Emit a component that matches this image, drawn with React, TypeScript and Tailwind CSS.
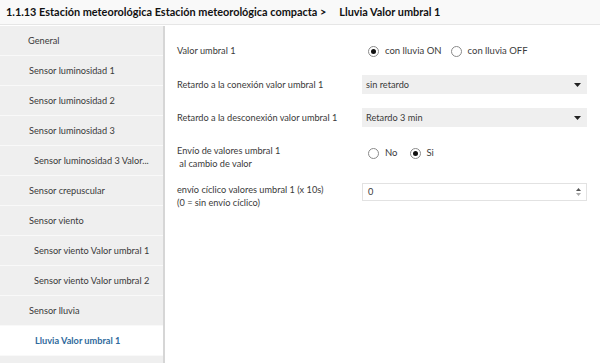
const items: { label: string; indent: string; active?: boolean }[] = [
  { label: "General", indent: "pl-[28px]" },
  { label: "Sensor luminosidad 1", indent: "pl-[29px]" },
  { label: "Sensor luminosidad 2", indent: "pl-[29px]" },
  { label: "Sensor luminosidad 3", indent: "pl-[29px]" },
  { label: "Sensor luminosidad 3 Valor...", indent: "pl-[34px]" },
  { label: "Sensor crepuscular", indent: "pl-[29px]" },
  { label: "Sensor viento", indent: "pl-[29px]" },
  { label: "Sensor viento Valor umbral 1", indent: "pl-[34px]" },
  { label: "Sensor viento Valor umbral 2", indent: "pl-[34px]" },
  { label: "Sensor lluvia", indent: "pl-[29px]" },
  { label: "Lluvia Valor umbral 1", indent: "pl-[35px]", active: true },
];

function Radio({ checked, label }: { checked?: boolean; label: string }) {
  return (
    <div className="flex items-center gap-[6px]">
      <span className="w-[11px] h-[11px] rounded-full border border-[#8a8a8a] bg-white flex items-center justify-center">
        {checked && <span className="w-[5px] h-[5px] rounded-full bg-[#111]" />}
      </span>
      <span>{label}</span>
    </div>
  );
}

function Select({ value }: { value: string }) {
  return (
    <div className="w-[225px] h-[19px] bg-[#efefef] flex items-center justify-between pl-[4px] pr-[6px]">
      <span>{value}</span>
      <svg width="7" height="4" viewBox="0 0 7 4">
        <path d="M0 0h7L3.5 4z" fill="#222" />
      </svg>
    </div>
  );
}

export default function App() {
  return (
    <div className="w-[600px] h-[363px] bg-white overflow-hidden text-[#3a3a3a] font-['Lato',sans-serif] whitespace-nowrap">
      <div className="h-[25px] bg-[#f9f9f9] border-b border-[#e6e6e6] flex items-center pl-[6px] text-[10.9px] font-bold text-[#111]">
        <span>1.1.13 Estación meteorológica Estación meteorológica compacta &gt;</span>
        <span className="ml-[13px]">Lluvia Valor umbral 1</span>
      </div>
      <div className="flex h-[338px] pt-[1px]">
        <div className="w-[165px] bg-[#efefef] border-r-2 border-[#d6d6d6] flex flex-col">
          {items.map((it) => (
            <div
              key={it.label}
              className={`h-[30px] shrink-0 flex items-center border-b border-[#f9f9f9] text-[9.2px] ${it.indent} ${
                it.active ? "bg-white text-[#2f6a9c] font-bold" : ""
              }`}
            >
              {it.label}
            </div>
          ))}
        </div>
        <div className="flex-1 pl-[12px] text-[9.2px]">
          <div className="flex items-center h-[30px] mt-[10px]">
            <div className="w-[185px]">Valor umbral 1</div>
            <div className="flex items-center gap-[9px] pl-[6px] text-[9.5px]">
              <Radio checked label="con lluvia ON" />
              <Radio label="con lluvia OFF" />
            </div>
          </div>
          <div className="flex items-center mt-[9px]">
            <div className="w-[185px]">Retardo a la conexión valor umbral 1</div>
            <Select value="sin retardo" />
          </div>
          <div className="flex items-center mt-[14px]">
            <div className="w-[185px]">Retardo a la desconexión valor umbral 1</div>
            <Select value="Retardo 3 min" />
          </div>
          <div className="flex items-center mt-[18px]">
            <div className="w-[185px] leading-[12.5px]">
              Envío de valores umbral 1
              <br />
              &nbsp;al cambio de valor
            </div>
            <div className="flex items-center gap-[12px] pl-[6px] -mt-[8px] text-[9.5px]">
              <Radio label="No" />
              <Radio checked label="Si" />
            </div>
          </div>
          <div className="flex items-start mt-[17px]">
            <div className="w-[185px] leading-[12.5px] -mt-[3px]">
              envío cíclico valores umbral 1 (x 10s)
              <br />
              (0 = sin envío cíclico)
            </div>
            <div className="w-[225px] h-[18px] border border-[#e2e2e2] bg-white flex items-center justify-between pl-[5px] pr-[5px] mt-[-4px]">
              <span>0</span>
              <div className="flex flex-col gap-[2px]">
                <svg width="5" height="3" viewBox="0 0 5 3">
                  <path d="M0 3h5L2.5 0z" fill="#555" />
                </svg>
                <svg width="5" height="3" viewBox="0 0 5 3">
                  <path d="M0 0h5L2.5 3z" fill="#aaa" />
                </svg>
              </div>
            </div>
          </div>
        </div>
      </div>
    </div>
  );
}
